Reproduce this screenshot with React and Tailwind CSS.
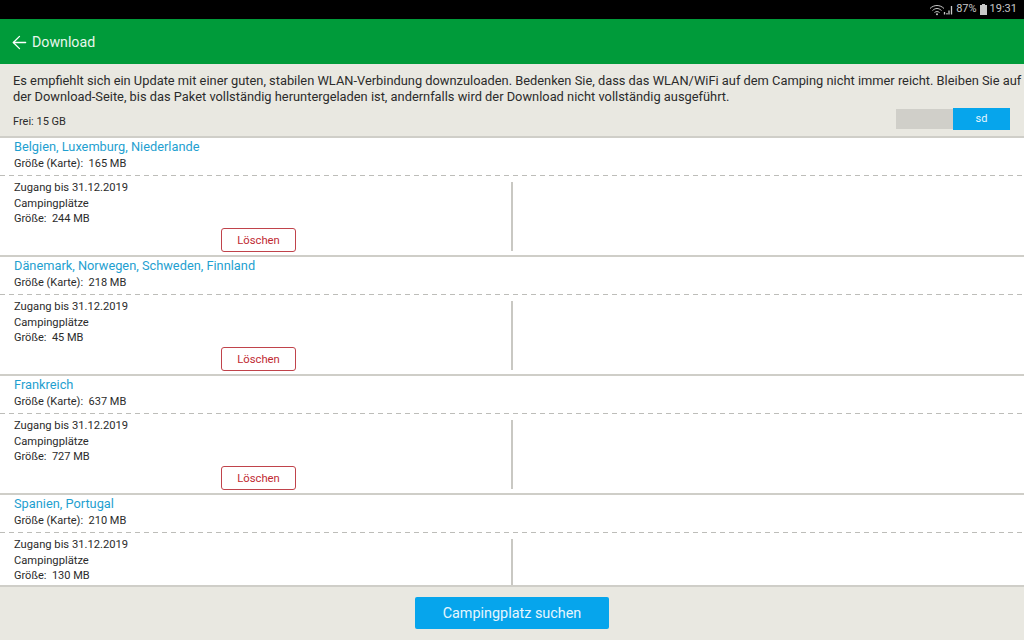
import React from "react";
import { ArrowLeft } from "lucide-react";

const rows = [
  { t: "Belgien, Luxemburg, Niederlande", k: "165 MB", s: "244 MB", del: true },
  { t: "Dänemark, Norwegen, Schweden, Finnland", k: "218 MB", s: "45 MB", del: true },
  { t: "Frankreich", k: "637 MB", s: "727 MB", del: true },
  { t: "Spanien, Portugal", k: "210 MB", s: "130 MB", del: false },
];

function Row({ t, k, s, del }) {
  return (
    <div className="h-[119px] shrink-0 border-b-2 border-[#cfcec8] bg-white last:border-b-0">
      <div className="h-[37px] pl-[14px]">
        <div className="h-[18px] text-[12.8px] leading-[18px] text-[#1f9fd0]">{t}</div>
        <div className="text-[11px] leading-[15px] text-[#2b2b2b]">Größe (Karte):&nbsp; {k}</div>
      </div>
      <div className="h-px bg-[repeating-linear-gradient(90deg,#bdbdb9_0,#bdbdb9_5px,transparent_5px,transparent_9px)]" />
      <div className="flex pt-[6px]">
        <div className="h-[69px] w-[513px] border-r-2 border-[#c9c8c3] pl-[14px]">
          <div className="-mt-[2px] text-[11.2px] leading-[15.5px] text-[#2b2b2b]">Zugang bis 31.12.2019</div>
          <div className="text-[11.2px] leading-[15.5px] text-[#2b2b2b]">Campingplätze</div>
          <div className="text-[11px] leading-[15.5px] text-[#2b2b2b]">Größe:&nbsp; {s}</div>
          {del && (
            <div className="ml-[207px] mt-[1px] flex h-[24px] w-[75px] items-center justify-center rounded-[3px] border border-[#c0434b] pt-[4px] text-[11.3px] text-[#c02a32]">
              Löschen
            </div>
          )}
        </div>
      </div>
    </div>
  );
}

export default function App() {
  return (
    <div className="flex h-[640px] w-[1024px] flex-col overflow-hidden bg-[#e9e8e1] font-['Roboto',sans-serif]">
      <div className="flex h-[19px] shrink-0 items-center justify-end gap-[3px] bg-black pr-[7px] text-[11px] text-[#c8c8c8]">
        <svg width="24" height="12" viewBox="0 0 24 12" fill="none" stroke="#c8c8c8" strokeWidth="1">
          <path d="M1 4.5C5 .5 11 .5 15 4.5M3.5 6.5C6.5 3.8 9.5 3.8 12.5 6.5M5.5 8.5C7 7.3 9 7.3 10.5 8.5" />
          <circle cx="8" cy="10.3" r="1" fill="#c8c8c8" stroke="none" />
          <path d="M15.5 8v2.5M18 10.5V9M20 10.5V6.5M22.5 10.5V2" strokeWidth="1.3" />
        </svg>
        <span>87%</span>
        <svg width="7" height="11" viewBox="0 0 7 11" fill="#c8c8c8"><path d="M2 0h3v1h2v10H0V1h2z" /></svg>
        <span>19:31</span>
      </div>
      <div className="flex h-[45px] shrink-0 items-center bg-[#009b3a] pl-[9px] pt-[2px] text-white">
        <ArrowLeft size={21} strokeWidth={1.5} />
        <span className="ml-[2px] text-[14.2px] text-[#e8f6ec]">Download</span>
      </div>
      <div className="h-[74px] shrink-0 border-b-2 border-[#cfcec8] pl-[13px] pt-[9px]">
        <p className="text-[12.85px] leading-[16px] text-[#2b2b2b]">
          Es empfiehlt sich ein Update mit einer guten, stabilen WLAN-Verbindung downzuloaden. Bedenken Sie, dass das WLAN/WiFi auf dem Camping nicht immer reicht. Bleiben Sie auf der Download-Seite, bis das Paket vollständig heruntergeladen ist, andernfalls wird der Download nicht vollständig ausgeführt.
        </p>
        <div className="mt-[3px] flex items-center justify-between pr-[14px]">
          <span className="mt-[6px] text-[11px] text-[#2b2b2b]">Frei: 15 GB</span>
          <div className="flex h-[22px] items-center">
            <div className="h-[20px] w-[57px] bg-[#d0cfc9]" />
            <div className="flex h-[22px] w-[57px] items-center justify-center bg-[#06a5ec] text-[11px] text-[#e6f6fe]">sd</div>
          </div>
        </div>
      </div>
      <div className="h-[447px] shrink-0 overflow-hidden bg-white">
        {rows.map((r) => <Row key={r.t} {...r} />)}
      </div>
      <div className="flex flex-1 items-start justify-center border-t-2 border-[#cfcec8] pt-[10px]">
        <div className="flex h-[32px] w-[194px] items-center justify-center rounded-[2px] bg-[#06a5ec] pt-[1px] text-[14.4px] text-[#e6f6fe]">
          Campingplatz suchen
        </div>
      </div>
    </div>
  );
}
